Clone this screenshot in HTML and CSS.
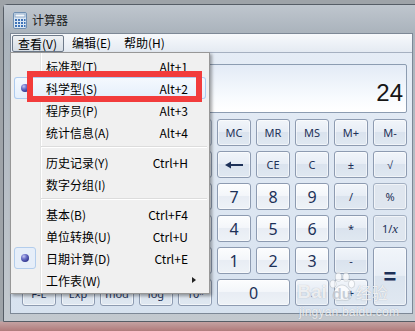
FILE: index.html
```html
<!DOCTYPE html>
<html lang="zh-CN">
<head>
<meta charset="utf-8">
<title>计算器</title>
<link rel="stylesheet" href="styles.css">
</head>
<body>
<div class="screen">
  <div class="window">
    <div class="titlebar">
      <svg class="app-icon" width="14" height="17" viewBox="0 0 14 17">
        <rect x="0.5" y="0.5" width="13" height="16" rx="1.5" fill="#dbe7f3" stroke="#6f8fb2"/>
        <rect x="2" y="2" width="10" height="3" fill="#f4f8fc" stroke="#7e9bbd" stroke-width="0.8"/>
        <g fill="#3f73b8">
          <rect x="2" y="7" width="2" height="2"/><rect x="5" y="7" width="2" height="2"/><rect x="8" y="7" width="2" height="2"/><rect x="11" y="7" width="1.5" height="2"/>
          <rect x="2" y="10" width="2" height="2"/><rect x="5" y="10" width="2" height="2"/><rect x="8" y="10" width="2" height="2"/><rect x="11" y="10" width="1.5" height="2"/>
          <rect x="2" y="13" width="2" height="2"/><rect x="5" y="13" width="2" height="2"/><rect x="8" y="13" width="2" height="2"/><rect x="11" y="13" width="1.5" height="2"/>
        </g>
      </svg>
      <span class="title">计算器</span>
    </div>
    <div class="frame-body">
      <div class="client">
        <div class="menubar">
          <span class="mb-item pressed">查看(V)</span>
          <span class="mb-item">编辑(E)</span>
          <span class="mb-item">帮助(H)</span>
        </div>
        <div class="content">
          <div class="display">24</div>
          <div class="keys">
            <div class="radios"></div>
            <button class="key">MC</button>
            <button class="key">MR</button>
            <button class="key">MS</button>
            <button class="key">M+</button>
            <button class="key">M-</button>

            <button class="key"></button>
            <button class="key"></button>
            <button class="key"></button>
            <button class="key"></button>
            <button class="key"></button>
            <button class="key"><svg width="18" height="8" viewBox="0 0 18 8"><polygon points="0,4 6,0.5 6,7.5" fill="#1d3158"/><rect x="5" y="3" width="13" height="2" fill="#1d3158"/></svg></button>
            <button class="key">CE</button>
            <button class="key">C</button>
            <button class="key">±</button>
            <button class="key">√</button>

            <button class="key"></button>
            <button class="key"></button>
            <button class="key"></button>
            <button class="key"></button>
            <button class="key"></button>
            <button class="key num">7</button>
            <button class="key num">8</button>
            <button class="key num">9</button>
            <button class="key">/</button>
            <button class="key flat">%</button>

            <button class="key"></button>
            <button class="key"></button>
            <button class="key"></button>
            <button class="key"></button>
            <button class="key"></button>
            <button class="key num">4</button>
            <button class="key num">5</button>
            <button class="key num">6</button>
            <button class="key">*</button>
            <button class="key flat">1/<i>x</i></button>

            <button class="key"></button>
            <button class="key"></button>
            <button class="key"></button>
            <button class="key"></button>
            <button class="key"></button>
            <button class="key num">1</button>
            <button class="key num">2</button>
            <button class="key num">3</button>
            <button class="key">-</button>
            <button class="key equals">=</button>

            <button class="key low">F-E</button>
            <button class="key low">Exp</button>
            <button class="key low">mod</button>
            <button class="key low">log</button>
            <button class="key low">10ˣ</button>
            <button class="key num zero">0</button>
            <button class="key">.</button>
            <button class="key">+</button>
          </div>
        </div>
      </div>
    </div>
  </div>

  <div class="dropdown">
    <div class="mi"><span class="chk"></span><span class="lbl">标准型(T)</span><span class="sc">Alt+1</span><span class="sub"></span></div>
    <div class="mi hover"><span class="chk on"><i class="dot"></i></span><span class="lbl">科学型(S)</span><span class="sc">Alt+2</span><span class="sub"></span></div>
    <div class="mi"><span class="chk"></span><span class="lbl">程序员(P)</span><span class="sc">Alt+3</span><span class="sub"></span></div>
    <div class="mi"><span class="chk"></span><span class="lbl">统计信息(A)</span><span class="sc">Alt+4</span><span class="sub"></span></div>
    <div class="sep"></div>
    <div class="mi"><span class="chk"></span><span class="lbl">历史记录(Y)</span><span class="sc">Ctrl+H</span><span class="sub"></span></div>
    <div class="mi"><span class="chk"></span><span class="lbl">数字分组(I)</span><span class="sc"></span><span class="sub"></span></div>
    <div class="sep"></div>
    <div class="mi"><span class="chk"></span><span class="lbl">基本(B)</span><span class="sc">Ctrl+F4</span><span class="sub"></span></div>
    <div class="mi"><span class="chk"></span><span class="lbl">单位转换(U)</span><span class="sc">Ctrl+U</span><span class="sub"></span></div>
    <div class="mi"><span class="chk on"><i class="dot"></i></span><span class="lbl">日期计算(D)</span><span class="sc">Ctrl+E</span><span class="sub"></span></div>
    <div class="mi"><span class="chk"></span><span class="lbl">工作表(W)</span><span class="sc"></span><span class="sub"><i class="arrow"></i></span></div>
  </div>

  <div class="redbox"></div>

  <div class="watermark">
    <div class="wm-top">
      <span class="wm-bai">Bai</span>
      <span class="wm-paw">
        <svg width="28" height="30" viewBox="0 0 28 30">
          <g fill="rgba(255,255,255,0.72)" stroke="rgba(120,130,140,0.35)" stroke-width="0.8">
            <ellipse cx="5" cy="12" rx="3.2" ry="4"/>
            <ellipse cx="10.5" cy="5" rx="3.2" ry="4.2"/>
            <ellipse cx="18" cy="5" rx="3.2" ry="4.2"/>
            <ellipse cx="23.5" cy="12" rx="3.2" ry="4"/>
            <path d="M14 13 C9 13 5 19 5 24 C5 28 9 29 14 28 C19 29 23 28 23 24 C23 19 19 13 14 13 Z"/>
          </g>
        </svg>
        <span class="wm-du">du</span>
      </span>
      <span class="wm-jy">经验</span>
    </div>
    <div class="wm-url">jingyan.baidu.com</div>
  </div>
</div>
</body>
</html>
```
FILE: styles.css
```css
* { box-sizing: border-box; }
html, body { margin: 0; padding: 0; }
body {
  width: 415px;
  height: 331px;
  overflow: hidden;
  background: #8a8a8a;
  font-family: "Noto Sans CJK SC", "Noto Sans", sans-serif;
}
.screen {
  position: relative;
  width: 415px;
  height: 331px;
  overflow: hidden;
  background: linear-gradient(to bottom, #9ea3a8 0, #9ea3a8 321px, #c4a2a2 322px, #b07b7b 331px);
}

/* window */
.window {
  margin: 4px 0 0 3px;
  width: 430px;
  border: 1px solid #565d66;
  border-radius: 4px 4px 0 0;
  background: #b9c0c8;
}
.titlebar {
  height: 28px;
  display: flex;
  align-items: center;
  padding-left: 9px;
  background: linear-gradient(to bottom, #bfc6ce, #aab3bc);
}
.app-icon { display: block; margin-top: 2px; }
.title {
  margin-left: 5px;
  font-size: 12px;
  color: #1b1b1b;
  line-height: 16px;
  margin-top: 1px;
}
.frame-body {
  padding: 0 6px 7px 6px;
  background: linear-gradient(to bottom, #aab3bc, #c3c9cf);
}
.client {
  width: 403px;
  border: 1px solid #7d8896;
  background: linear-gradient(to bottom, #e6edf6, #d7e2ef);
}

/* menubar */
.menubar {
  height: 19px;
  display: flex;
  align-items: stretch;
  border-bottom: 1px solid #a5b0c0;
  background: linear-gradient(to bottom, #f7f9fc, #e4eaf2);
  font-size: 12px;
  color: #000;
}
.mb-item {
  width: 53px;
  padding-left: 7px;
  line-height: 18px;
  white-space: nowrap;
}
.mb-item.pressed {
  width: 52px;
  margin-left: 1px;
  margin-top: 1px;
  padding-left: 5px;
  line-height: 16px;
  border: 1px solid #6e7a8a;
  border-radius: 2px;
  background: linear-gradient(to bottom, #eef1f4, #d6dde5);
}
.mb-item.pressed + .mb-item { padding-left: 8px; }

/* content */
.content {
  padding: 11px 5px 7px 11px;
}
.display {
  height: 49px;
  margin-bottom: 6px;
  border: 1px solid #8c9cb1;
  border-radius: 2px;
  background: linear-gradient(to bottom, #e3ebf6, #f8fbfe 70%, #ffffff);
  text-align: right;
  padding: 14px 3px 0 0;
  font-family: "Liberation Sans", Arial, sans-serif;
  font-size: 24px;
  line-height: 27px;
  color: #161616;
}
.keys {
  display: grid;
  grid-template-columns: repeat(10, 34px);
  grid-auto-rows: 27px;
  gap: 5px;
}
.radios {
  grid-column: span 5;
  border: 1px solid #9eadc1;
  border-radius: 3px;
}
.key {
  margin: 0;
  padding: 0;
  border: 1px solid #8d9bb1;
  border-radius: 3px;
  background: linear-gradient(to bottom, #f1f5fa 0%, #e7edf5 48%, #dae3ee 50%, #e0e8f1 100%);
  box-shadow: inset 0 0 0 1px rgba(255,255,255,0.55);
  color: #1d3158;
  font-family: "Noto Sans", "Liberation Sans", sans-serif;
  font-size: 11px;
  line-height: 1;
  display: flex;
  align-items: center;
  justify-content: center;
}
.key.low { align-items: flex-end; padding-bottom: 6px; }
.key.num {
  background: linear-gradient(to bottom, #fcfdfe 0%, #f3f6fa 48%, #e8edf4 50%, #eef2f7 100%);
  font-size: 16px;
}
.key.flat {
  background: #dfe6ef;
  border-color: #a3b0c2;
}
.key i { font-family: "Liberation Serif", serif; font-size: 13px; }
.key.zero { grid-column: span 2; }
.key.equals {
  grid-row: span 2;
  font-family: "Liberation Sans", sans-serif;
  font-weight: bold;
  font-size: 22px;
}

/* dropdown menu */
.dropdown {
  position: absolute;
  left: 10px;
  top: 52px;
  width: 200px;
  padding: 2px 0;
  border: 1px solid #979797;
  background: linear-gradient(to right, #f0f0f0 29px, #e2e3e3 29px, #e2e3e3 30px, #ffffff 30px, #ffffff 31px, #f0f0f0 31px);
  box-shadow: 2px 2px 3px rgba(0,0,0,0.35);
  font-size: 12px;
  color: #000;
}
.mi {
  height: 22px;
  margin: 0 3px;
  display: flex;
  align-items: center;
  border-radius: 3px;
}
.mi.hover {
  box-shadow: inset 0 0 0 1px #aecbef;
  background: linear-gradient(to bottom, #f5f9fe, #e4eefb);
}
.chk {
  flex: none;
  width: 22px;
  height: 22px;
  display: flex;
  align-items: center;
  justify-content: center;
  border-radius: 3px;
}
.chk.on {
  border: 1px solid #b3cdec;
  background: #e6eef9;
}
.mi.hover .chk.on { background: transparent; border-color: transparent; }
.dot {
  width: 8px;
  height: 8px;
  border-radius: 50%;
  background: radial-gradient(circle at 35% 30%, #c3c6f2 0, #6a70c8 35%, #2c3088 80%, #24276c 100%);
}
.lbl {
  flex: 1;
  margin-left: 10px;
  white-space: nowrap;
}
.sc { flex: none; white-space: nowrap; }
.sub {
  flex: none;
  width: 18px;
  display: flex;
  align-items: center;
  padding-left: 4px;
}
.arrow {
  width: 0;
  height: 0;
  border-left: 4px solid #222;
  border-top: 3.5px solid transparent;
  border-bottom: 3.5px solid transparent;
}
.sep {
  height: 8px;
  margin: 0 2px 0 30px;
  background: linear-gradient(to bottom, transparent 3px, #dcdcdc 3px, #dcdcdc 4px, #ffffff 4px, #ffffff 5px, transparent 5px);
}

/* annotation */
.redbox {
  position: absolute;
  left: 27px;
  top: 71px;
  width: 175px;
  height: 31px;
  border: 6px solid #f23c3c;
}

/* watermark */
.watermark {
  position: absolute;
  left: 297px;
  top: 271px;
  color: rgba(255,255,255,0.8);
  text-shadow: 0 0 1px rgba(90,100,115,0.45);
  font-family: "Liberation Sans", sans-serif;
}
.wm-top { display: flex; align-items: flex-end; height: 31px; }
.wm-bai { font-size: 19px; font-weight: bold; line-height: 19px; margin-bottom: 1px; }
.wm-paw { position: relative; width: 28px; height: 30px; margin-left: 1px; }
.wm-paw svg { display: block; }
.wm-du {
  position: absolute;
  left: 5px;
  bottom: 1px;
  font-size: 15px;
  font-weight: bold;
  line-height: 15px;
  color: rgba(160,170,185,0.55);
  text-shadow: none;
}
.wm-jy {
  font-family: "Noto Sans CJK SC", sans-serif;
  font-size: 16px;
  line-height: 18px;
  margin-bottom: 1px;
}
.wm-url {
  margin-top: 4px;
  margin-left: 2px;
  font-size: 12px;
  line-height: 12px;
  letter-spacing: 0.2px;
}
```
